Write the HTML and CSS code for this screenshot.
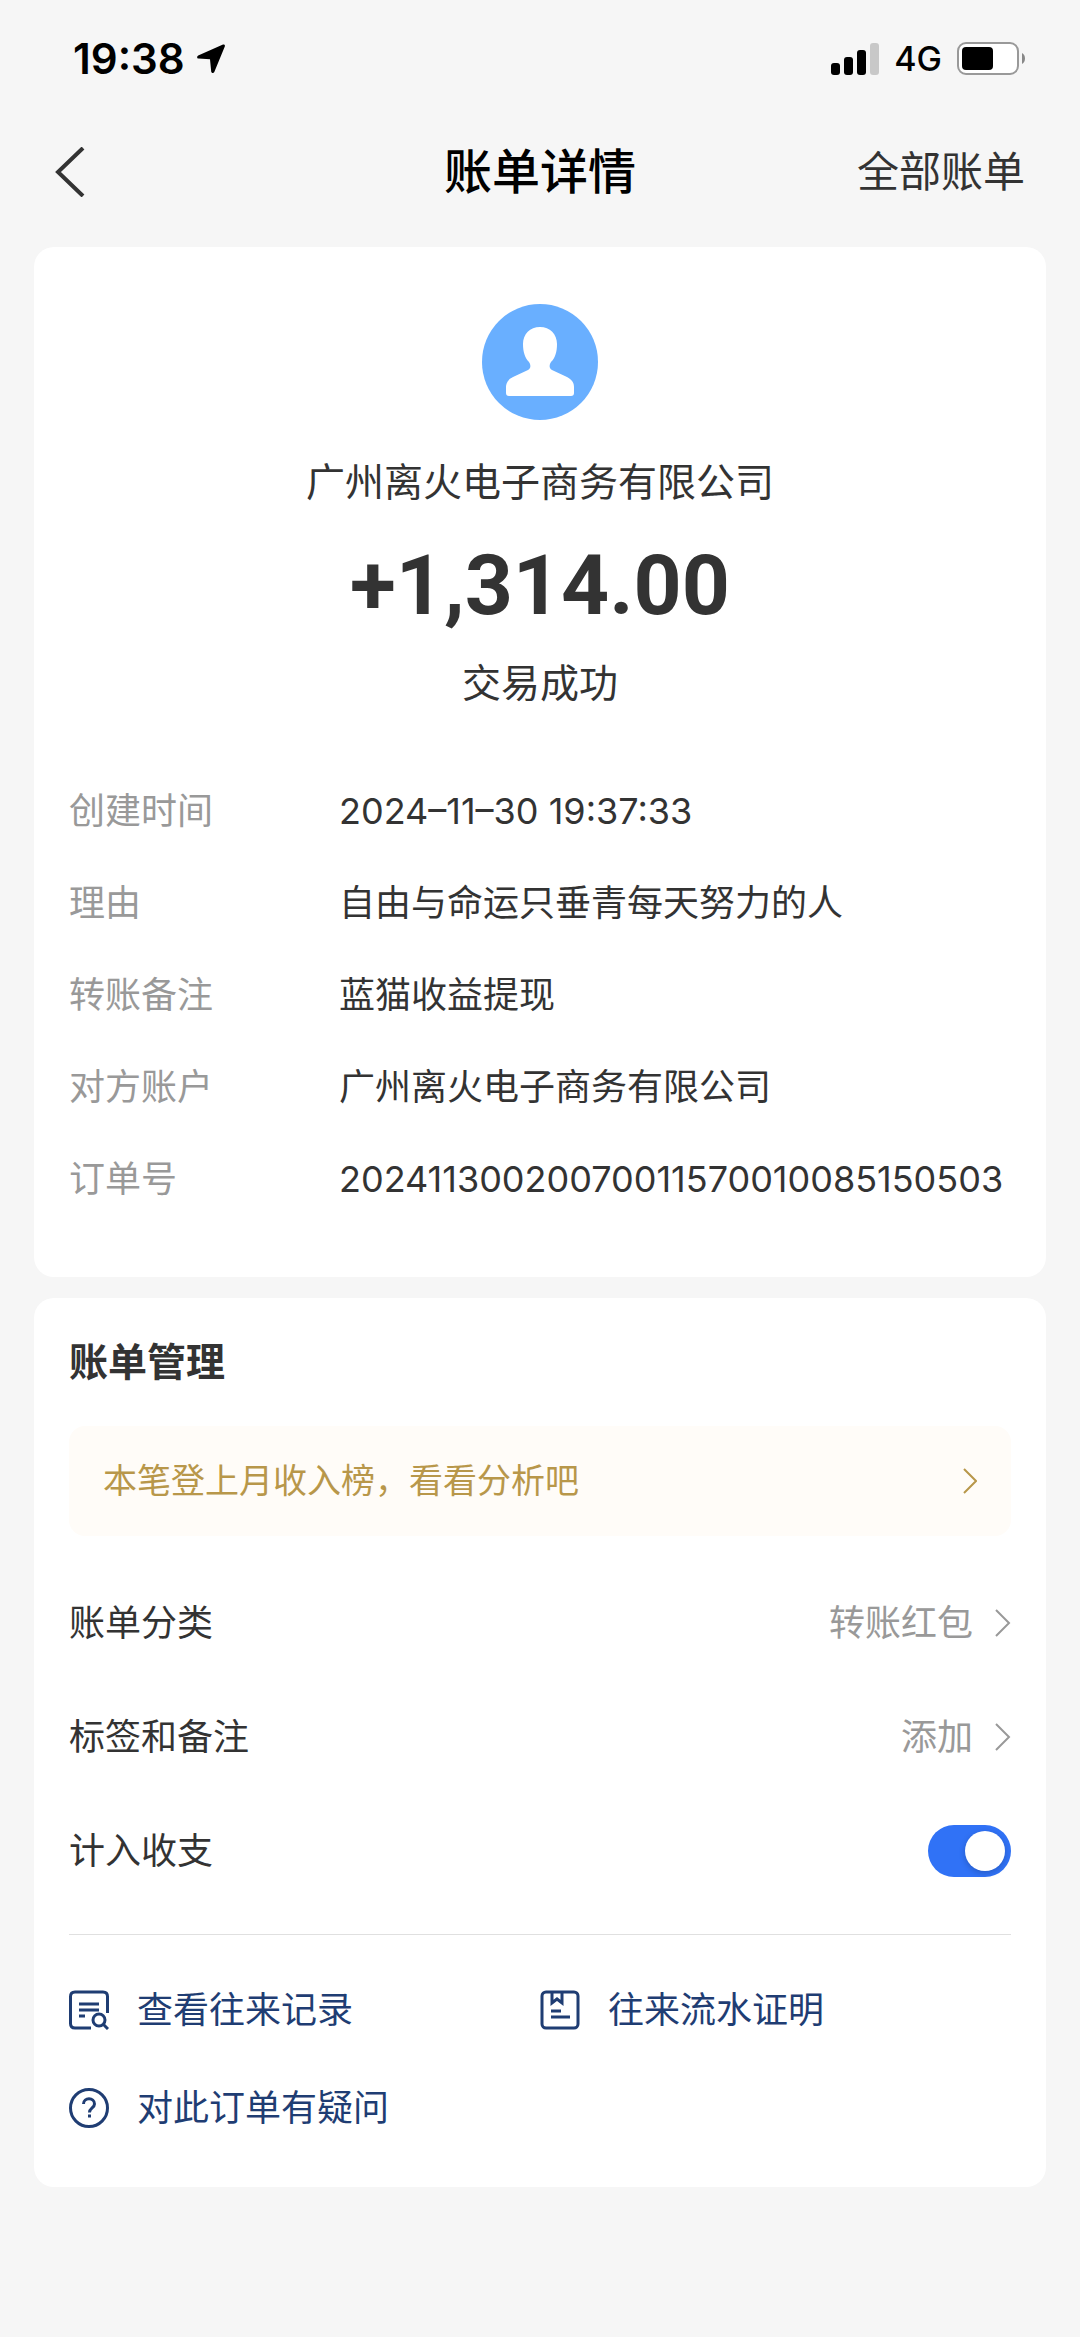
FILE: index.html
```html
<!DOCTYPE html>
<html lang="zh-CN">
  <head>
    <meta charset="UTF-8" />
    <meta name="viewport" content="width=device-width, initial-scale=1.0" />
    <title>账单详情</title>
    <link rel="stylesheet" href="styles.css">
  </head>
  <body>
    <!-- Status bar -->
    <div class="status-bar">
      <div class="status-left">
        <span class="time">19:38</span>
        <svg width="28" height="30" viewBox="0 0 28 30" aria-hidden="true">
          <path d="M26 .6 1.2 11.6C-.4 12.400-.1 14.500 1.500 14.600L13 15.200 14.200 27.500C14.400 29.300 16.600 29.500 17.300 28L27.800 2.600C28.300 1.200 27.300 0 26 .6Z" />
        </svg>
      </div>
      <div class="status-right">
        <svg width="48" height="32" viewBox="0 0 48 32" aria-hidden="true">
          <rect x="0" y="20" width="9" height="12" rx="3" />
          <rect x="13" y="14" width="9" height="18" rx="3" />
          <rect x="26" y="7" width="9" height="25" rx="3" />
          <rect x="39" y="0" width="9" height="32" rx="3" fill="#c8c8c8" />
        </svg>
        <span class="network">4G</span>
        <svg width="69" height="34" viewBox="0 0 69 34" aria-hidden="true">
          <rect x="1" y="1" width="60" height="31" rx="8" fill="#fff" stroke="#999" stroke-width="2" />
          <rect x="5" y="5" width="31" height="23" rx="4" />
          <path d="M65 11c4 2 4 9 0 11z" fill="#888" />
        </svg>
      </div>
    </div>

    <!-- Nav -->
    <header class="nav">
      <button class="back" aria-label="返回">
        <svg width="30" height="50" viewBox="0 0 30 50" aria-hidden="true">
          <path d="M28 1 3 25l25 24" fill="none" stroke="#333" stroke-width="4" />
        </svg>
      </button>
      <h1>账单详情</h1>
      <a href="#" class="all-bills">全部账单</a>
    </header>

    <main>
      <!-- Bill -->
      <section class="card bill">
        <svg class="avatar" viewBox="0 0 116 116" aria-hidden="true">
          <circle cx="58" cy="58" r="58" fill="#69afff" />
          <path d="M58 23c10 0 17 7 17 17 0 8-2 14-6 18-2 3-2 6 1 8l15 7c6 3 7 7 7 10v6q0 3-3 3H27q-3 0-3-3v-6c0-3 1-7 7-10l15-7c3-2 3-5 1-8-4-4-6-10-6-18 0-10 7-17 17-17z" fill="#fff" />
        </svg>
        <p class="name">广州离火电子商务有限公司</p>
        <p class="amount">+1,314.00</p>
        <p class="result">交易成功</p>

        <dl class="details">
          <dt>创建时间</dt>
          <dd>2024–11–30 19:37:33</dd>
          <dt>理由</dt>
          <dd>自由与命运只垂青每天努力的人</dd>
          <dt>转账备注</dt>
          <dd>蓝猫收益提现</dd>
          <dt>对方账户</dt>
          <dd>广州离火电子商务有限公司</dd>
          <dt>订单号</dt>
          <dd>20241130020070011570010085150503</dd>
        </dl>
      </section>

      <!-- Management -->
      <section class="card manage">
        <h2>账单管理</h2>
        <a href="#" class="banner">
          本笔登上月收入榜，看看分析吧
          <svg width="14" height="26" viewBox="0 0 14 26" aria-hidden="true">
            <path d="M1 1l12 12L1 25" />
          </svg>
        </a>

        <a href="#" class="row">
          <span>账单分类</span>
          <span class="row-value">
            转账红包
            <svg width="16" height="28" viewBox="0 0 16 28" aria-hidden="true">
              <path d="M1 1l13 13L1 27" />
            </svg>
          </span>
        </a>
        <a href="#" class="row">
          <span>标签和备注</span>
          <span class="row-value">
            添加
            <svg width="16" height="28" viewBox="0 0 16 28" aria-hidden="true">
              <path d="M1 1l13 13L1 27" />
            </svg>
          </span>
        </a>
        <div class="row">
          <label for="count">计入收支</label>
          <input type="checkbox" id="count" class="switch" checked />
        </div>

        <nav class="links">
          <a href="#">
            <svg width="40" height="40" viewBox="0 0 40 40" aria-hidden="true">
              <path d="M22 38H6q-4.500 0-4.500-4.500v-27Q1.500 2 6 2h28q4.500 0 4.500 4.500V23" />
              <path d="M10 14h20M10 20h20M10 26h6" />
              <circle cx="30" cy="30" r="6" />
              <path d="M34 34l5 5" />
            </svg>
            查看往来记录
          </a>
          <a href="#">
            <svg width="40" height="40" viewBox="0 0 40 40" aria-hidden="true">
              <rect x="2" y="2" width="36" height="36" rx="4" />
              <path d="M12 2v11l5-4 5 4V2M11 21h10M11 27h19" />
            </svg>
            往来流水证明
          </a>
          <a href="#">
            <svg width="40" height="40" viewBox="0 0 40 40" aria-hidden="true">
              <circle cx="20" cy="20" r="18.500" />
              <path d="M14.500 16c0-7 11-7 11 0 0 4-5 4-5 8.500M20.500 26.500v3" />
            </svg>
            对此订单有疑问
          </a>
        </nav>
      </section>
    </main>
  </body>
</html>
```
FILE: styles.css
```css
* {
  box-sizing: border-box;
}
body {
  margin: 0;
  background-color: #f6f6f6;
  color: #333;
  font-family: Inter, "Noto Sans CJK SC", sans-serif;
  font-size: 36px;
  line-height: 52px;
}
a {
  color: inherit;
  text-decoration: none;
}
svg {
  flex: none;
}
h1,
h2,
p,
dl,
dd {
  margin: 0;
}

/* Status bar */
.status-bar {
  display: flex;
  justify-content: space-between;
  align-items: center;
  height: 118px;
  padding: 0 54px 0 73px;
  color: #000;
}
.status-left,
.status-right {
  display: flex;
  align-items: center;
}
.status-left {
  gap: 12px;
}
.status-right {
  gap: 15px;
}
.time {
  font-size: 42px;
  font-weight: 600;
}
.network {
  font-size: 34px;
  font-weight: 500;
}

/* Nav */
.nav {
  display: grid;
  grid-template-columns: 1fr auto 1fr;
  align-items: center;
  height: 108px;
  padding: 0 55px;
}
.back {
  justify-self: start;
  display: flex;
  padding: 0;
  border: none;
  background: none;
  cursor: pointer;
}
.nav h1 {
  color: #000;
  font-size: 48px;
  font-weight: 500;
}
.all-bills {
  justify-self: end;
  font-size: 42px;
}

.card {
  margin: 21px 34px 20px;
  padding: 0 35px;
  border-radius: 20px;
  background-color: #fff;
}

/* Bill */
.bill {
  display: flex;
  flex-direction: column;
  align-items: center;
  padding-top: 57px;
  padding-bottom: 52px;
}
.avatar {
  width: 116px;
  height: 116px;
}
.name,
.result {
  font-size: 39px;
}
.name {
  margin-top: 36px;
}
.amount {
  margin: 26px 0 19px;
  font-family: Roboto, sans-serif;
  font-size: 84px;
  font-weight: 700;
  line-height: 104px;
}
.details {
  display: grid;
  grid-template-columns: 270px 1fr;
  width: 100%;
  margin-top: 56px;
  line-height: 92px;
}
.details dt {
  color: #999;
}

/* Management */
.manage {
  padding-top: 38px;
  padding-bottom: 30px;
}
.manage h2 {
  font-size: 39px;
}
.banner {
  display: flex;
  justify-content: space-between;
  align-items: center;
  height: 110px;
  margin: 38px 0 30px;
  padding: 0 34px;
  border-radius: 16px;
  background-color: #fffcf8;
  color: #b8974a;
  font-size: 34px;
}
.banner svg,
.row svg,
.links svg {
  fill: none;
  stroke: currentColor;
  stroke-width: 2;
}
.row {
  display: flex;
  justify-content: space-between;
  align-items: center;
  height: 114px;
}
.row-value {
  display: flex;
  align-items: center;
  gap: 22px;
  color: #999;
}
.switch {
  appearance: none;
  width: 83px;
  height: 52px;
  margin: 0;
  padding: 6px;
  border-radius: 26px;
  background-color: #ccc;
  cursor: pointer;
}
.switch::before {
  content: "";
  display: block;
  width: 40px;
  height: 40px;
  border-radius: 50%;
  background-color: #fff;
  box-shadow: 0 2px 6px rgba(0, 0, 0, 0.2);
}
.switch:checked {
  background-color: #3072f6;
}
.switch:checked::before {
  margin-left: auto;
}
.links {
  display: grid;
  grid-template-columns: 1fr 1fr;
  margin-top: 26px;
  padding-top: 26px;
  border-top: 1px solid #e0e0e0;
  color: #1f3d73;
}
.links a {
  display: flex;
  align-items: center;
  gap: 28px;
  height: 98px;
}
.links svg {
  stroke-width: 3;
}
```
